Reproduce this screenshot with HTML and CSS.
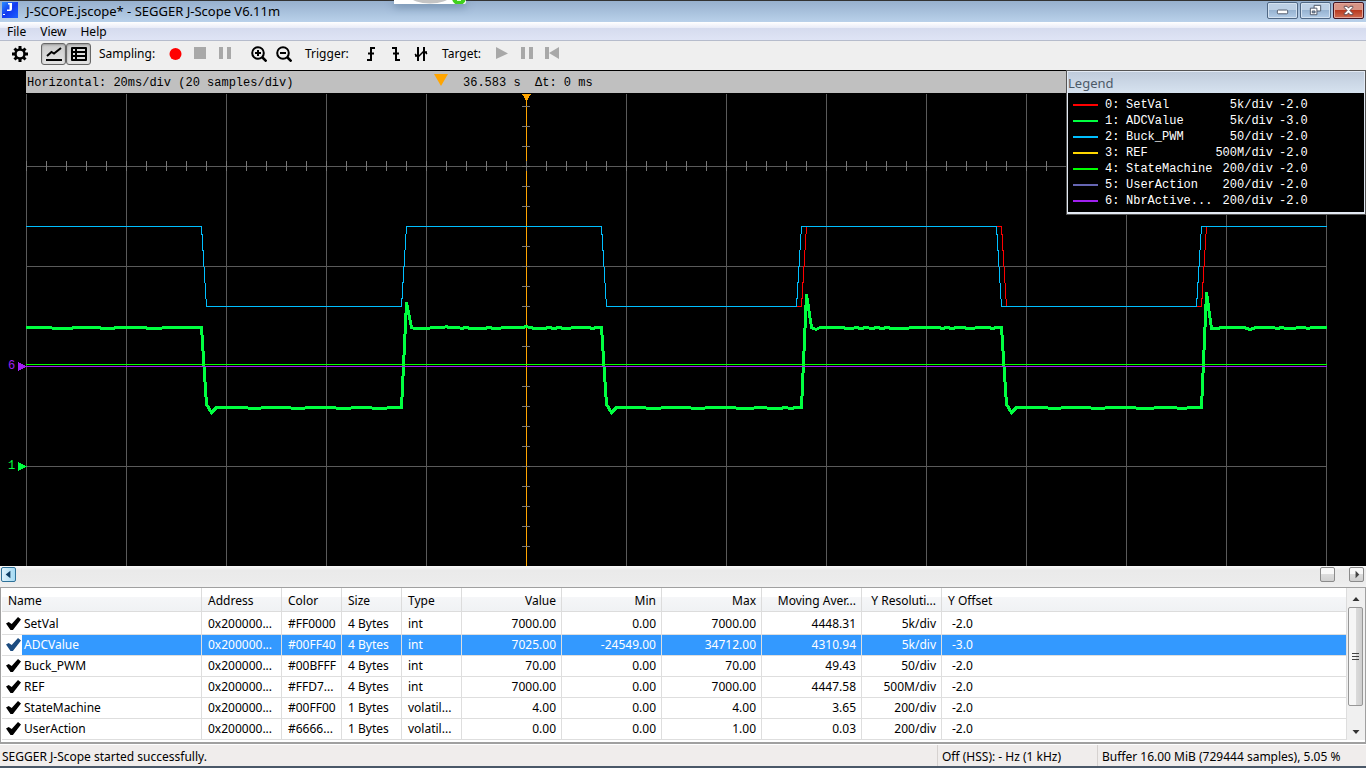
FILE: index.html
```html
<!DOCTYPE html>
<html lang="en">
<head>
<meta charset="utf-8">
<title>J-SCOPE.jscope* - SEGGER J-Scope V6.11m</title>
<link rel="stylesheet" href="styles.css">
</head>
<body>
<header class="titlebar">
  <svg class="app-icon" viewBox="0 0 16 16" aria-hidden="true">
    <defs><linearGradient id="blue" x1="0" x2="1" y1="0" y2="1"><stop offset="0" stop-color="#2a8cff"/><stop offset=".5" stop-color="#1238f0"/><stop offset="1" stop-color="#1c62ff"/></linearGradient></defs>
    <rect width="16" height="16" fill="url(#blue)"/>
    <path d="M6 1h4v6q0 2-2 2H5V7.500h2.500V2.500H6z" fill="#fff"/><path d="M1 12h2v1H1z" fill="#fff"/>
  </svg>
  <h1 class="title">J-SCOPE.jscope* - SEGGER J-Scope V6.11m</h1>
  <svg class="notch" viewBox="0 0 72 4" aria-hidden="true"><path d="M0 0h72v2q0 2-2 2H0z" fill="#fff"/><ellipse cx="36" cy="-3" rx="19" ry="6.500" fill="#c4c4c4"/><circle cx="65" cy="-2" r="7" fill="#3fd01c"/><path d="M63 0h4v1h-4z" fill="#d8ffd0"/></svg>
  <div class="window-buttons">
    <button class="win" aria-label="Minimize"><svg viewBox="0 0 30 16"><rect x="9.500" y="7.500" width="11" height="4" rx="1" fill="#fff" stroke="#4c5566"/></svg></button>
    <button class="win" aria-label="Restore"><svg viewBox="0 0 30 16"><path d="M13.500 2.500h7v6h-7z" fill="#fff" stroke="#4c5566"/><path d="M9.500 5.500h7v7h-7z" fill="#fff" stroke="#4c5566"/><path d="M11.500 8.500h3v2h-3z" fill="#8fa9c8" stroke="#4c5566"/></svg></button>
    <button class="win close" aria-label="Close"><svg viewBox="0 0 30 16"><path d="M10.500 3.500h3l1.500 2 1.500-2h3v1.500l-3 3 3 3v1.500h-3l-1.500-2-1.500 2h-3V11l3-3-3-3z" fill="#fff" stroke="#56414a"/></svg></button>
  </div>
</header>
<nav class="menu"><button>File</button><button>View</button><button>Help</button></nav>
<div class="toolbar">
  <button class="tool settings" aria-label="Settings"><svg viewBox="0 0 16 16"><path d="M8 0v16M0 8h16M2.500 2.500l11 11M13.500 2.500l-11 11" stroke="#000" stroke-width="3"/><circle cx="8" cy="8" r="4.500" fill="#efefef" stroke="#000" stroke-width="2.500"/></svg></button>
  <button class="tool on" aria-label="Graph"><svg viewBox="0 0 16 16"><path d="M1 10l4.500-4 2.500 1.500L15 2" fill="none" stroke="#000" stroke-width="2"/><path d="M0 13h16v2H0z"/></svg></button>
  <button class="tool on" aria-label="Table"><svg viewBox="0 0 16 16"><rect y="1" width="16" height="14" rx="1"/><path d="M2 3h2v2H2zM6 3h8v2H6zM2 7h2v2H2zM6 7h8v2H6zM2 11h2v2H2zM6 11h8v2H6z" fill="#ddd"/></svg></button>
  <span class="group sampling">Sampling:</span>
  <button class="tool" aria-label="Record"><svg viewBox="0 0 16 16"><circle cx="8.500" cy="8" r="6" fill="#f00"/></svg></button>
  <button class="tool" aria-label="Stop"><svg viewBox="0 0 16 16"><path d="M2 1h12v12H2z" fill="#a8a8a8"/></svg></button>
  <button class="tool" aria-label="Pause sampling"><svg viewBox="0 0 16 16"><path d="M2 1h4v12H2zM10 1h4v12h-4z" fill="#a8a8a8"/></svg></button>
  <button class="tool zoom" aria-label="Zoom in"><svg viewBox="0 0 16 16"><circle cx="7" cy="7" r="5.800" fill="none" stroke="#000" stroke-width="2"/><path d="M11 11l4.500 4.500" stroke="#000" stroke-width="2.500"/><path d="M4 7h6M7 4v6" stroke="#000" stroke-width="2"/></svg></button>
  <button class="tool" aria-label="Zoom out"><svg viewBox="0 0 16 16"><circle cx="7" cy="7" r="5.800" fill="none" stroke="#000" stroke-width="2"/><path d="M11 11l4.500 4.500" stroke="#000" stroke-width="2.500"/><path d="M4 7h6" stroke="#000" stroke-width="2"/></svg></button>
  <span class="group trigger">Trigger:</span>
  <button class="tool" aria-label="Rising edge"><svg viewBox="0 0 16 16"><path d="M4 14h4V2h4M5 7.500h6" fill="none" stroke="#000" stroke-width="2"/></svg></button>
  <button class="tool" aria-label="Falling edge"><svg viewBox="0 0 16 16"><path d="M4 2h4v12h4M5 7.500h6" fill="none" stroke="#000" stroke-width="2"/></svg></button>
  <button class="tool" aria-label="Both edges"><svg viewBox="0 0 16 16"><path d="M5 1v14M11 1v14" stroke="#000" stroke-width="2"/><path d="M2 10h3M11 6h3M2 8l3 3 3-3M8 8l3-3 3 3" fill="none" stroke="#000" stroke-width="1.500"/></svg></button>
  <span class="group target">Target:</span>
  <button class="tool" aria-label="Run"><svg viewBox="0 0 16 16"><path d="M2 1l12 6.500L2 13z" fill="#a8a8a8"/></svg></button>
  <button class="tool" aria-label="Halt"><svg viewBox="0 0 16 16"><path d="M2 1h4v12H2zM10 1h4v12h-4z" fill="#a8a8a8"/></svg></button>
  <button class="tool" aria-label="Reset"><svg viewBox="0 0 16 16"><path d="M1 1h4v12H1zM15 1v12L5 7z" fill="#a8a8a8"/></svg></button>
</div>
<main class="scope">
  <div class="info">
    <span class="horizontal">Horizontal: 20ms/div (20 samples/div)</span>
    <svg class="marker" viewBox="0 0 14 12" aria-hidden="true"><path d="M0 0h14L7 12z" fill="#ffa500"/></svg>
    <span class="time">36.583 s</span><span>Δt: 0 ms</span>
  </div>
  <svg class="plot" viewBox="0 93 1366 473" preserveAspectRatio="xMinYMin slice" shape-rendering="crispEdges" fill="none" role="img" aria-label="Sampled signals">
    <path stroke="#5a5a5a" d="M26.500 94v472M126.500 94v472M226.500 94v472M326.500 94v472M426.500 94v472M626.500 94v472M726.500 94v472M826.500 94v472M926.500 94v472M1026.500 94v472M1126.500 94v472M1226.500 94v472M1326.500 94v472M26 166.500h1301M26 266.500h1301M26 366.500h1301M26 466.500h1301"/>
    <path stroke="#ffa500" d="M526.500 94v472"/>
    <path d="M522 94h9v1h-1v1h-1v2h-1v2h-1v2h-1v-2h-1v-2h-1v-2h-1v-1h-1z" fill="#ffa500"/>
    <path d="M26 166h1301" stroke="#777" stroke-width="10" stroke-dasharray="1 19"/>
    <path d="M526 106v460" stroke="#777" stroke-width="8" stroke-dasharray="1 19"/>
    <path stroke="#f00" d="M796 306.500H801.500L806.500 226.500M996 226.500H1001.500L1006.500 306.500M1196 306.500H1201.500L1206.500 226.500"/>
    <path stroke="#00ff40" stroke-width="3" d="M26 327.500H50L54 328.500H70L75 327.500H98L103 328.500H112L117 327.500H144L149 328.500H160L164 327.500H201.500L206.500 404.500L211.500 412.500L216.500 407.500H246L250 408.500H259L263 407.500H289L293 408.500H303L307 407.500H334L338 408.500H349L353 407.500H370L374 408.500H385L389 407.500H401.500L406.500 302.500L411.500 327.500L415 328.500H429L431 327.500H444L446 326.500L449 327.500H459L461 328.500L466 327.500L471 328.500H484L489 327.500L494 328.500H499L503 327.500H523L526 326.500L530 327.500L535 328.500H544L549 327.500L554 328.500L559 327.500L564 328.500H569L573 327.500H589L592 328.500L597 327.500H601.500L606.500 404.500L611.500 412.500L616.500 407.500H644L648 408.500H659L663 407.500H689L693 408.500H703L707 407.500H734L738 408.500H752L756 407.500H765L769 408.500H780L785 407.500L791 408.500L796 407.500H801.500L806.500 294.500L811.500 327.500L816 329.500L820 327.500H843L846 328.500H852L856 327.500L861 328.500L866 327.500L872 328.500L877 327.500L882 328.500L887 327.500L892 328.500H908L910 327.500H939L942 328.500L947 327.500L952 328.500L957 327.500H963L968 328.500H973L977 327.500H989L992 328.500L997 327.500H1001.500L1006.500 404.500L1011.500 412.500L1016.500 407.500H1046L1050 408.500H1059L1063 407.500H1089L1093 408.500H1103L1107 407.500H1134L1138 408.500H1152L1156 407.500H1175L1179 408.500H1185L1189 407.500H1201.500L1206.500 292.500L1211.500 328.500H1218L1221 327.500H1244L1250 329.500L1256 327.500H1273L1277 328.500L1282 327.500L1286 328.500H1294L1298 327.500H1304L1308 328.500L1312 327.500H1327"/>
    <path stroke="#00bfff" d="M26 226.500H201.500L206.500 306.500H401.500L406.500 226.500H601.500L606.500 306.500H796.500L801.500 226.500H996.500L1001.500 306.500H1196.500L1201.500 226.500H1327"/>
    <path stroke="#0f0" d="M26 364.500h1301"/><path stroke="#a020f0" d="M26 366.500h1301"/>
    <path fill="#a020f0" d="M18 362l9 4.500-9 4.500z"/><path fill="#00ff40" d="M18 462l9 4.500-9 4.500z"/>
    <text class="channel" x="8" y="369" fill="#a020f0">6</text><text class="channel" x="8" y="469" fill="#00ff40">1</text>
  </svg>
  <section class="legend">
    <h2>Legend</h2>
    <div class="legend-body"><table>
      <tr><td><i class="line red"></i></td><td>0:</td><td>SetVal</td><td>5k/div</td><td>-2.0</td></tr>
      <tr><td><i class="line green"></i></td><td>1:</td><td>ADCValue</td><td>5k/div</td><td>-3.0</td></tr>
      <tr><td><i class="line sky"></i></td><td>2:</td><td>Buck_PWM</td><td>50/div</td><td>-2.0</td></tr>
      <tr><td><i class="line gold"></i></td><td>3:</td><td>REF</td><td>500M/div</td><td>-2.0</td></tr>
      <tr><td><i class="line lime"></i></td><td>4:</td><td>StateMachine</td><td>200/div</td><td>-2.0</td></tr>
      <tr><td><i class="line slate"></i></td><td>5:</td><td>UserAction</td><td>200/div</td><td>-2.0</td></tr>
      <tr><td><i class="line purple"></i></td><td>6:</td><td>NbrActive...</td><td>200/div</td><td>-2.0</td></tr>
    </table></div>
  </section>
</main>
<div class="hscroll">
  <button class="hot" aria-label="Scroll left"><svg viewBox="0 0 14 14"><path d="M9 3v8L4 7z" fill="#0f3f66"/></svg></button>
  <button class="thumb" aria-label="Scroll position"></button>
  <button aria-label="Scroll right"><svg viewBox="0 0 14 14"><path d="M6 3v8l4-4z" fill="#444"/></svg></button>
</div>
<section class="list">
  <table class="symbols">
    <colgroup><col class="w200"><col class="w80"><col class="w60"><col class="w60"><col class="w60"><col class="w100"><col class="w100"><col class="w100"><col class="w100"><col class="w80"><col></colgroup>
    <thead><tr><th>Name</th><th>Address</th><th>Color</th><th>Size</th><th>Type</th><th class="num">Value</th><th class="num">Min</th><th class="num">Max</th><th class="num">Moving Aver...</th><th class="num">Y Resoluti...</th><th>Y Offset</th></tr></thead>
    <tbody>
      <tr><td><label><input type="checkbox" checked><span>SetVal</span></label></td><td>0x200000...</td><td>#FF0000</td><td>4 Bytes</td><td>int</td><td class="num">7000.00</td><td class="num">0.00</td><td class="num">7000.00</td><td class="num">4448.31</td><td class="num">5k/div</td><td>-2.0</td></tr>
      <tr class="selected"><td><label><input type="checkbox" checked><span>ADCValue</span></label></td><td>0x200000...</td><td>#00FF40</td><td>4 Bytes</td><td>int</td><td class="num">7025.00</td><td class="num">-24549.00</td><td class="num">34712.00</td><td class="num">4310.94</td><td class="num">5k/div</td><td>-3.0</td></tr>
      <tr><td><label><input type="checkbox" checked><span>Buck_PWM</span></label></td><td>0x200000...</td><td>#00BFFF</td><td>4 Bytes</td><td>int</td><td class="num">70.00</td><td class="num">0.00</td><td class="num">70.00</td><td class="num">49.43</td><td class="num">50/div</td><td>-2.0</td></tr>
      <tr><td><label><input type="checkbox" checked><span>REF</span></label></td><td>0x200000...</td><td>#FFD7...</td><td>4 Bytes</td><td>int</td><td class="num">7000.00</td><td class="num">0.00</td><td class="num">7000.00</td><td class="num">4447.58</td><td class="num">500M/div</td><td>-2.0</td></tr>
      <tr><td><label><input type="checkbox" checked><span>StateMachine</span></label></td><td>0x200000...</td><td>#00FF00</td><td>1 Bytes</td><td>volatil...</td><td class="num">4.00</td><td class="num">0.00</td><td class="num">4.00</td><td class="num">3.65</td><td class="num">200/div</td><td>-2.0</td></tr>
      <tr><td><label><input type="checkbox" checked><span>UserAction</span></label></td><td>0x200000...</td><td>#6666...</td><td>1 Bytes</td><td>volatil...</td><td class="num">0.00</td><td class="num">0.00</td><td class="num">1.00</td><td class="num">0.03</td><td class="num">200/div</td><td>-2.0</td></tr>
    </tbody>
  </table>
  <div class="vscroll">
    <button class="arrow" aria-label="Scroll up"><svg viewBox="0 0 14 14"><path d="M4 9h7L7.500 5z" fill="#333"/></svg></button>
    <button class="grip" aria-label="Scroll rows"><svg viewBox="0 0 8 8"><path d="M0 .500h7M0 3.500h7M0 6.500h7" stroke="#444" shape-rendering="crispEdges"/></svg></button>
    <button class="arrow" aria-label="Scroll down"><svg viewBox="0 0 14 14"><path d="M4 5h7L7.500 9z" fill="#333"/></svg></button>
  </div>
</section>
<footer class="status"><span>SEGGER J-Scope started successfully.</span><span>Off (HSS): - Hz (1 kHz)</span><span>Buffer 16.00 MiB (729444 samples), 5.05 %</span></footer>
</body>
</html>
```
FILE: styles.css
```css
* { box-sizing: border-box; }
body {
  margin: 0;
  height: 100vh;
  display: flex;
  flex-direction: column;
  overflow: hidden;
  background: #efefef;
  color: #000;
  font: 12px/16px "Noto Sans", "Open Sans", sans-serif;
}
button { border: 0; padding: 0; background: none; font: inherit; color: inherit; }
svg { display: block; }
h1, h2 { margin: 0; font: inherit; }

.titlebar {
  position: relative;
  flex: none;
  height: 22px;
  border-top: 1px solid #333;
  padding: 0 2px;
  display: flex;
  align-items: flex-start;
  background: linear-gradient(#97b0ce, #b9d1ea);
}
.app-icon { width: 16px; height: 16px; margin-top: 1px; }
.title { margin: 2px 0 0 8px; flex: 1; font-size: 13px; }
.notch { position: absolute; left: 394px; top: -1px; width: 72px; height: 4px; filter: drop-shadow(0 2px 4px #5a7896); }
.window-buttons { display: flex; gap: 2px; padding-top: 1px; }
.win {
  width: 31px;
  height: 17px;
  border: 1px solid #4f6784;
  border-radius: 2px;
  box-shadow: inset 0 0 0 1px #d3e1f0;
  background: linear-gradient(#bccfe5 50%, #97b3d1 50%, #b3cde8);
}
.win svg { width: 29px; height: 15px; }
.close { border-color: #431422; box-shadow: inset 0 0 0 1px #e3a69a; background: linear-gradient(#d89486 45%, #b93a20 50%, #d06c52); }

.menu {
  flex: none;
  height: 19px;
  border-bottom: 1px solid #b6bccc;
  display: flex;
  gap: 14px;
  padding: 1px 0 0 7px;
  background: linear-gradient(#fff, #e8ebf7 6px, #d5dbee 6px, #dfe4f5);
}
.menu button { line-height: 17px; }

.toolbar { flex: none; height: 29px; display: flex; align-items: center; padding: 0 7px 3px; }
.tool { width: 25px; height: 22px; display: flex; align-items: center; justify-content: center; }
.tool svg { width: 16px; height: 16px; }
.settings { margin-right: 9px; }
.on { border: 1px solid #666; border-radius: 3px; background: linear-gradient(#c9c9c9, #e4e4e4); box-shadow: inset 0 1px 2px #999; }
.zoom { margin-left: 9px; }
.group { padding-left: 8px; }
.sampling { width: 71px; }
.trigger { padding-left: 9px; width: 62px; }
.target { padding-left: 9px; width: 56px; }

.scope { position: relative; flex: 1; min-height: 0; padding-top: 1px; background: #000; display: flex; flex-direction: column; }
.info {
  flex: none;
  height: 22px;
  margin-left: 26px;
  padding: 1px 0 0 1px;
  background: #c0c0c0;
  display: flex;
  align-items: center;
  font: 12px/16px "Liberation Mono", monospace;
}
.horizontal { width: 407px; }
.marker { width: 14px; height: 12px; margin: 0 15px 5px 0; }
.time { width: 72px; }
.plot { width: 100%; flex: 1; min-height: 0; }
.channel { font: 12px "Liberation Mono", monospace; }

.legend { position: absolute; top: 0; right: 0; width: 300px; border: 1px solid #555; background: #e3eaf4; padding: 1px 1px 2px; }
.legend h2 { height: 21px; padding: 3px 0 0; color: #4c5a68; font-size: 13px; background: linear-gradient(#c0ccdc, #d6e2ef); }
.legend-body { background: #000; color: #fff; padding: 4px 0 3px 5px; }
.legend table { border-collapse: collapse; font: 12px/16px "Liberation Mono", monospace; }
.legend td { padding: 0; height: 16px; white-space: nowrap; }
.legend td:nth-child(1) { width: 32px; }
.legend td:nth-child(2) { width: 21px; }
.legend td:nth-child(3) { width: 89px; }
.legend td:nth-child(4) { width: 58px; text-align: right; }
.legend td:nth-child(5) { padding-left: 6px; }
.line { display: block; width: 25px; height: 2px; }
.red { background: #f00; }
.green { background: #00ff40; }
.sky { background: #00bfff; }
.gold { background: #ffd700; }
.lime { background: #0f0; }
.slate { background: #6666b3; }
.purple { background: #a020f0; }

.hscroll { flex: none; height: 21px; padding: 1px 2px 0 1px; display: flex; background: linear-gradient(#fafafa, #eaeaea 4px, #ececec 16px, #f0f0f0); }
.hscroll button { width: 15px; height: 15px; border: 1px solid #8b8b8b; border-radius: 2px; background: linear-gradient(#f8f8f8 50%, #dcdcdc 50%, #d0d0d0); }
.hscroll svg { width: 13px; height: 13px; }
.hscroll .hot { border-color: #2f7299; background: linear-gradient(90deg, #dff3fd, #a5daf3); }
.hscroll .thumb { margin: 0 14px 0 auto; }

.list { flex: none; display: flex; border: solid #a0a0a0; border-width: 1px 1px 2px; padding: 0 0 2px 1px; background: #fff; }
.symbols { flex: 1; width: 0; table-layout: fixed; border-collapse: separate; border-spacing: 0; }
.w200 { width: 200px; } .w100 { width: 100px; } .w80 { width: 80px; } .w60 { width: 60px; }
.symbols th { height: 24px; padding: 2px 5px 0 6px; text-align: left; font-weight: normal; white-space: nowrap; border: solid #dcdcdc; border-width: 0 1px 1px 0; background: linear-gradient(#fff 40%, #f5f6f8 40%, #f0f2f4); }
.symbols td { height: 21px; padding: 0 5px 0 6px; white-space: nowrap; border: solid #dedede; border-width: 0 1px 1px 0; }
.symbols tbody tr:first-child td { height: 23px; padding-top: 2px; }
.symbols .num { text-align: right; }
.symbols td:first-child { padding: 0; }
.symbols td:last-child { padding-left: 10px; }
.symbols label { display: flex; height: 20px; align-items: center; }
.symbols label span { padding-left: 2px; }
.symbols input { appearance: none; margin: 0; width: 20px; height: 20px; background: #fff; color: #000; }
.symbols input:checked::before { content: ""; display: block; width: 15px; height: 13px; margin: 3px 0 0 4px; background: currentColor; clip-path: polygon(0 50%, 18% 38%, 38% 54%, 80% 0, 100% 20%, 46% 100%, 30% 100%); }
.selected td { background: #3399ff; color: #fff; }
.symbols .selected input { color: #1c4c80; }
.vscroll { width: 18px; display: flex; flex-direction: column; background: #f0f0f0; padding: 3px 2px 0 1px; }
.arrow { height: 16px; }
.arrow svg { width: 15px; height: 14px; }
.grip { height: 99px; margin-bottom: auto; border: 1px solid #979797; border-radius: 2px; background: linear-gradient(90deg, #f6f6f6 50%, #dcdcdc 50%, #cfcfcf); display: flex; align-items: center; justify-content: center; }
.grip svg { width: 8px; height: 8px; }

.status { flex: none; height: 24px; border-bottom: 2px solid #4a5868; border-top: 1px solid #fff; display: grid; grid-template-columns: 1fr 160px 269px; background: #f0edec; line-height: 23px; }
.status span { height: 21px; padding-left: 2px; }
.status span + span { padding-left: 4px; border-left: 1px solid #d6d2d0; }
```
